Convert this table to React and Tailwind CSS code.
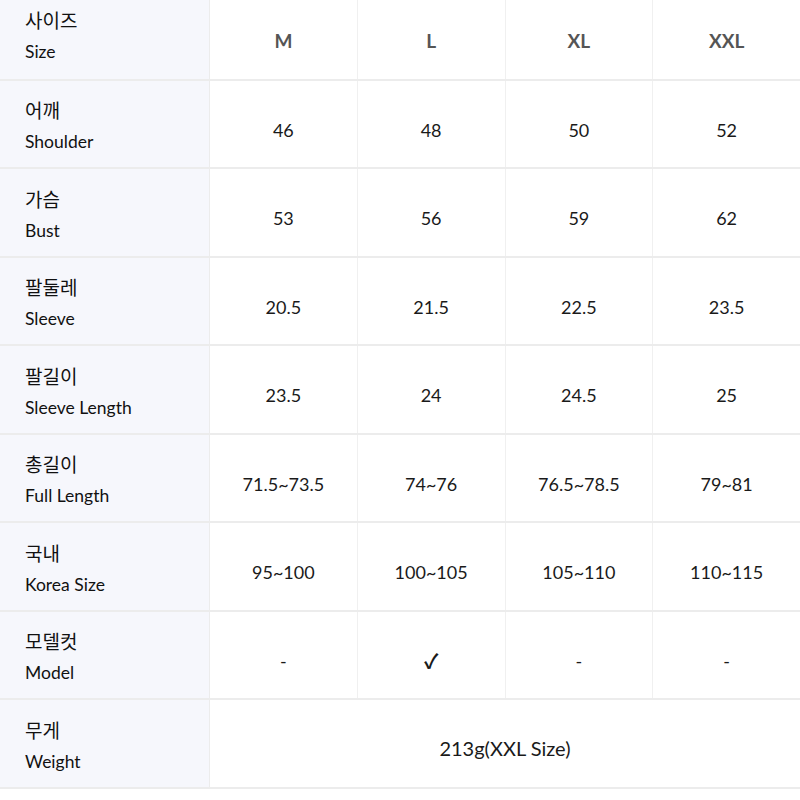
const sizes = ["M", "L", "XL", "XXL"];

const rows = [
  { ko: "어깨", en: "Shoulder", values: ["46", "48", "50", "52"], h: "h-[88px]" },
  { ko: "가슴", en: "Bust", values: ["53", "56", "59", "62"], h: "h-[89px]" },
  { ko: "팔둘레", en: "Sleeve", values: ["20.5", "21.5", "22.5", "23.5"], h: "h-[88px]" },
  { ko: "팔길이", en: "Sleeve Length", values: ["23.5", "24", "24.5", "25"], h: "h-[89px]" },
  { ko: "총길이", en: "Full Length", values: ["71.5~73.5", "74~76", "76.5~78.5", "79~81"], h: "h-[88px]" },
  { ko: "국내", en: "Korea Size", values: ["95~100", "100~105", "105~110", "110~115"], h: "h-[89px]" },
  { ko: "모델컷", en: "Model", values: ["-", "✓", "-", "-"], h: "h-[88px]" },
];

function Label({ ko, en, head }) {
  return (
    <div
      className={`w-[210px] shrink-0 bg-[#f6f7fc] border-r border-[#ececec] flex flex-col justify-center pl-[25px] ${head ? "pb-2" : "pt-1"}`}
    >
      <span className="text-[19px] leading-[31px] text-[#111]">{ko}</span>
      <span className="text-[17.5px] leading-[31px] text-[#111]">{en}</span>
    </div>
  );
}

export default function App() {
  return (
    <div
      className="w-[800px] h-[800px] bg-white overflow-hidden"
      style={{ fontFamily: "Lato, 'Noto Sans CJK KR', sans-serif" }}
    >
      {/* header */}
      <div className="flex h-[81px] border-b-2 border-[#ececec]">
        <Label ko="사이즈" en="Size" head />
        {sizes.map((s, i) => (
          <div
            key={s}
            className={`flex-1 flex items-center justify-center pt-1 text-[19px] font-bold text-[#555] ${i < 3 ? "border-r border-[#f0f0f0]" : ""}`}
          >
            {s}
          </div>
        ))}
      </div>

      {rows.map((r) => (
        <div key={r.en} className={`flex ${r.h} border-b-2 border-[#ececec]`}>
          <Label ko={r.ko} en={r.en} />
          {r.values.map((v, i) => (
            <div
              key={i}
              className={`flex-1 flex items-center justify-center pt-3 text-[18px] text-[#1a1a1a] ${v === "✓" ? "font-bold text-[20px]" : ""} ${i < 3 ? "border-r border-[#f0f0f0]" : ""}`}
            >
              {v}
            </div>
          ))}
        </div>
      ))}

      {/* weight */}
      <div className="flex h-[89px] border-b-2 border-[#ececec]">
        <Label ko="무게" en="Weight" />
        <div className="flex-1 flex items-center justify-center pt-2 text-[20px] text-[#1a1a1a]">
          213g(XXL Size)
        </div>
      </div>
    </div>
  );
}
